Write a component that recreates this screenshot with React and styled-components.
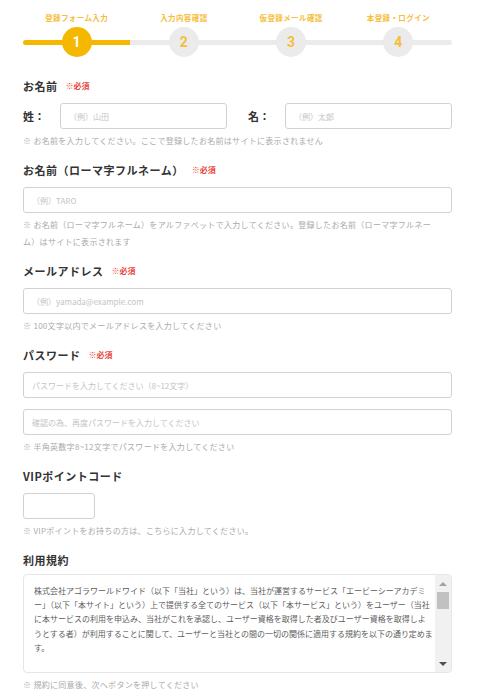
import styled, { createGlobalStyle } from "styled-components";

const YELLOW = "#f5b800";

const steps = ["登録フォーム入力", "入力内容確認", "仮登録メール確認", "本登録・ログイン"];

const termsLines = [
  "株式会社アゴラワールドワイド（以下「当社」という）は、当社が運営するサービス「エービーシーアカデミ",
  "ー」（以下「本サイト」という）上で提供する全てのサービス（以下「本サービス」という）をユーザー（当社",
  "に本サービスの利用を申込み、当社がこれを承認し、ユーザー資格を取得した者及びユーザー資格を取得しよ",
  "うとする者）が利用することに関して、ユーザーと当社との間の一切の関係に適用する規約を以下の通り定めま",
  "す。",
];

export default function App() {
  return (
    <>
      <GlobalStyle />
      <Page>
        <Stepper>
          <Track />
          {steps.map((label, i) => (
            <StepLabel key={label} $col={i + 1}>{label}</StepLabel>
          ))}
          {steps.map((label, i) => (
            <StepCircle key={label} $col={i + 1} $active={i === 0}>{i + 1}</StepCircle>
          ))}
        </Stepper>

        <Field>
          <Heading>お名前<Required>※必須</Required></Heading>
          <NameRow>
            <NameLabel>姓：</NameLabel>
            <Input placeholder="（例）山田" />
            <NameLabel $offset>名：</NameLabel>
            <Input placeholder="（例）太郎" />
          </NameRow>
          <Hint>※ お名前を入力してください。ここで登録したお名前はサイトに表示されません</Hint>
        </Field>

        <Field>
          <Heading>お名前（ローマ字フルネーム）<Required>※必須</Required></Heading>
          <Input placeholder="（例）TARO" />
          <Hint>
            ※ お名前（ローマ字フルネーム）をアルファベットで入力してください。登録したお名前（ローマ字フルネー
            <br />
            ム）はサイトに表示されます
          </Hint>
        </Field>

        <Field>
          <Heading>メールアドレス<Required>※必須</Required></Heading>
          <Input placeholder="（例）yamada@example.com" />
          <Hint>※ 100文字以内でメールアドレスを入力してください</Hint>
        </Field>

        <Field>
          <Heading>パスワード<Required>※必須</Required></Heading>
          <InputStack>
            <Input type="password" placeholder="パスワードを入力してください（8~12文字）" />
            <Input type="password" placeholder="確認の為、再度パスワードを入力してください" />
          </InputStack>
          <Hint>※ 半角英数字8~12文字でパスワードを入力してください</Hint>
        </Field>

        <Field>
          <Heading>VIPポイントコード</Heading>
          <Input $width="72px" />
          <Hint>※ VIPポイントをお持ちの方は、こちらに入力してください。</Hint>
        </Field>

        <Field $top="3px">
          <Heading $gap="7px">利用規約</Heading>
          <TermsBox>
            <TermsText>
              {termsLines.map((line) => (
                <div key={line}>{line}</div>
              ))}
            </TermsText>
            <ScrollBar>
              <ArrowCell><Arrow $up /></ArrowCell>
              <Thumb />
              <Spacer />
              <ArrowCell><Arrow /></ArrowCell>
            </ScrollBar>
          </TermsBox>
          <Hint>※ 規約に同意後、次へボタンを押してください</Hint>
        </Field>
      </Page>
    </>
  );
}

const GlobalStyle = createGlobalStyle`
  body {
    margin: 0;
    background: #fff;
    font-family: "Noto Sans CJK JP", "Noto Sans", sans-serif;
    color: #333;
  }
  * { box-sizing: border-box; }
`;

const Page = styled.main`
  padding: 0 28px 0 23px;
`;

const Stepper = styled.div`
  display: grid;
  grid-template-columns: repeat(4, 1fr);
  grid-template-rows: 10px 30px;
  row-gap: 4px;
  padding-top: 13px;
  margin-bottom: 22px;
`;

const Track = styled.div`
  grid-row: 2;
  grid-column: 1 / -1;
  align-self: center;
  height: 5px;
  border-radius: 3px;
  background: linear-gradient(to right, ${YELLOW} 25%, #ebebeb 25%);
`;

const StepLabel = styled.span`
  grid-row: 1;
  grid-column: ${({ $col }) => $col};
  text-align: center;
  font-size: 7.5px;
  line-height: 10px;
  letter-spacing: 0.4px;
  font-weight: 700;
  color: #f6bd3a;
`;

const StepCircle = styled.span`
  grid-row: 2;
  grid-column: ${({ $col }) => $col};
  justify-self: center;
  width: 30px;
  height: 30px;
  border-radius: 50%;
  display: flex;
  align-items: center;
  justify-content: center;
  font-family: Roboto, "Liberation Sans", sans-serif;
  font-weight: 700;
  font-size: 14px;
  background: ${({ $active }) => ($active ? YELLOW : "#ebebeb")};
  color: ${({ $active }) => ($active ? "#fff" : "#f6bd3a")};
`;

const Field = styled.section`
  margin-top: ${({ $top }) => $top || "0"};
  margin-bottom: 14px;
`;

const Heading = styled.h2`
  display: flex;
  align-items: center;
  margin: 0 0 ${({ $gap }) => $gap || "10px"};
  font-size: 11px;
  line-height: 14px;
  font-weight: 700;
  letter-spacing: 0.5px;
  color: #333;
`;

const Required = styled.span`
  margin-left: 8px;
  font-size: 8px;
  font-weight: 700;
  letter-spacing: 0;
  color: #e8453c;
`;

const NameRow = styled.div`
  display: grid;
  grid-template-columns: 37px 1fr 58px 1fr;
  align-items: center;
`;

const NameLabel = styled.span`
  padding-left: ${({ $offset }) => ($offset ? "21px" : "0")};
  font-size: 11px;
  font-weight: 700;
  color: #333;
`;

const Input = styled.input`
  display: block;
  width: ${({ $width }) => $width || "100%"};
  height: 26px;
  padding: 0 8px;
  border: 1px solid #d2d2d2;
  border-radius: 3px;
  background: #fff;
  font-family: inherit;
  font-size: 8px;
  color: #333;
  outline: none;

  &::placeholder {
    color: #c4c4c4;
  }
`;

const InputStack = styled.div`
  display: flex;
  flex-direction: column;
  gap: 11px;
`;

const Hint = styled.p`
  margin: 3px 0 0;
  font-size: 8px;
  line-height: 17px;
  letter-spacing: 0.3px;
  color: #aaa;
  white-space: nowrap;
`;

const TermsBox = styled.div`
  display: flex;
  height: 99px;
  border: 1px solid #e6e6e6;
  border-radius: 4px;
  overflow: hidden;
`;

const TermsText = styled.div`
  flex: 1;
  padding: 9px 8px 0 10px;
  font-size: 8px;
  line-height: 14.2px;
  color: #5c5c5c;
  white-space: nowrap;
  overflow: hidden;
`;

const ScrollBar = styled.div`
  width: 16px;
  display: flex;
  flex-direction: column;
  align-items: center;
  background: #f1f1f1;
`;

const ArrowCell = styled.div`
  height: 17px;
  display: flex;
  align-items: center;
  justify-content: center;
`;

const Arrow = styled.span`
  width: 0;
  height: 0;
  border-left: 4px solid transparent;
  border-right: 4px solid transparent;
  ${({ $up }) =>
    $up ? "border-bottom: 4px solid #a3a3a3;" : "border-top: 4px solid #505050;"}
`;

const Thumb = styled.div`
  width: 12px;
  height: 17px;
  background: #c1c1c1;
`;

const Spacer = styled.div`
  flex: 1;
`;
